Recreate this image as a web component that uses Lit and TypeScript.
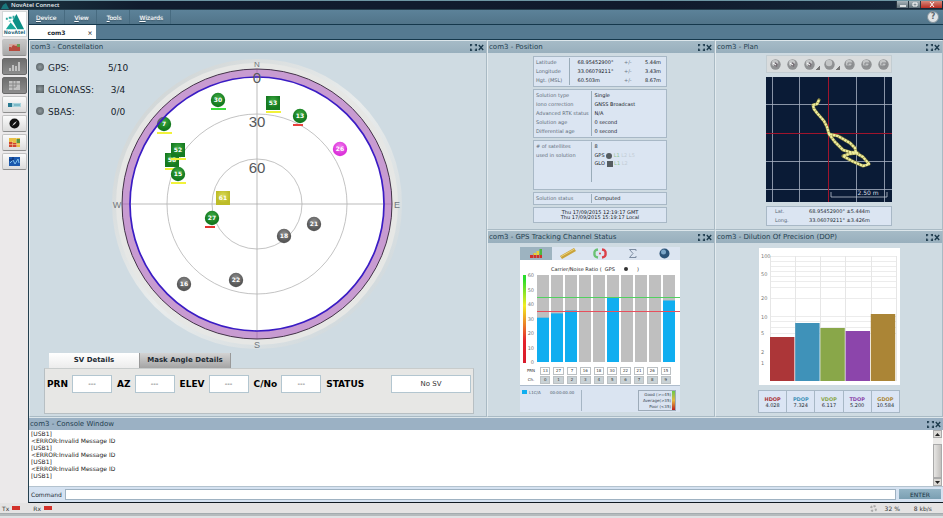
import { LitElement, html, svg, css } from "lit";
import { customElement } from "lit/decorators.js";
import { classMap } from "lit/directives/class-map.js";

type Sat = { id: string; x: number; y: number; sq?: boolean; kind: string; line?: string };

// Coordinates are relative to the centre of the sky plot.
const SATS: Sat[] = [
  { id: "30", x: -39, y: -104, kind: "green", line: "#3ddc3d" },
  { id: "53", x: 16, y: -101, sq: true, kind: "green", line: "#f2f23a" },
  { id: "13", x: 43, y: -88, kind: "green", line: "#e8403c" },
  { id: "26", x: 83, y: -55, kind: "magenta" },
  { id: "7", x: -93, y: -80, kind: "green", line: "#f2f23a" },
  { id: "58", x: -85, y: -44, sq: true, kind: "green", line: "#f2f23a" },
  { id: "52", x: -79, y: -54, sq: true, kind: "green", line: "#f2f23a" },
  { id: "15", x: -79, y: -30, kind: "green", line: "#f2f23a" },
  { id: "61", x: -34, y: -6, sq: true, kind: "yellow" },
  { id: "27", x: -45, y: 14, kind: "green", line: "#e03430" },
  { id: "18", x: 27, y: 32, kind: "gray" },
  { id: "21", x: 57, y: 20, kind: "gray" },
  { id: "22", x: -21, y: 76, kind: "gray" },
  { id: "16", x: -73, y: 80, kind: "gray" },
];

const CHANNELS = [
  { prn: "13", value: 31 }, { prn: "27", value: 34 }, { prn: "7", value: 36 },
  { prn: "16", value: 0 }, { prn: "18", value: 0 }, { prn: "30", value: 45 },
  { prn: "22", value: 0 }, { prn: "21", value: 0 }, { prn: "26", value: 0 },
  { prn: "15", value: 43 },
];

const DOPS = [
  { name: "HDOP", value: "4.028", color: "#ac3638", height: 44 },
  { name: "PDOP", value: "7.324", color: "#3f92b9", height: 58 },
  { name: "VDOP", value: "6.117", color: "#89a749", height: 53 },
  { name: "TDOP", value: "5.200", color: "#8c45ab", height: 50 },
  { name: "GDOP", value: "10.584", color: "#ab8536", height: 67 },
];

const TRACK = "M53 23L51 27L47 28L48 32L51 36L58 44L61 50L63 57L72 59L84 66L89 71L90 76L97 80L103 87L97 89L86 84L77 79L83 77L92 76L84 75L77 73L69 65L63 57";

const windowIcons = html`
  <span class="tools">
    <button class="tool" aria-label="Expand">
      <svg width="7" height="7" viewBox="0 0 7 7"><path d="M0 .9H2.2M4.8 .9H7M0 6.1H2.2M4.8 6.1H7M.8 0V2.2M6.2 0V2.2M.8 4.6V7M6.2 4.6V7" stroke="#1c3a4c" stroke-width="1.3" fill="none"/></svg>
    </button>
    <button class="tool" aria-label="Close">
      <svg width="6" height="7" viewBox="0 0 6 7"><path d="M.8 1L5.2 6M5.2 1L.8 6" stroke="#1c3a4c" stroke-width="1.3"/></svg>
    </button>
  </span>`;

const head = (title: string) => html`<header class="phead"><h2 class="ptitle">com3 - ${title}</h2>${windowIcons}</header>`;

@customElement("sky-plot")
export class SkyPlot extends LitElement {
  static styles = css`
    :host { display: block; }
    svg { display: block; font-family: "DejaVu Sans", sans-serif; }
    .num { font-size: 6px; font-weight: bold; fill: #fff; text-anchor: middle; }
    .deg { font: 15px "Liberation Sans", sans-serif; fill: #55585a; text-anchor: middle; }
    .dir { font: 9px "Liberation Sans", sans-serif; fill: #6f767c; text-anchor: middle; }
    .north { font-size: 8px; }
  `;
  render() {
    return html`<svg width="294" height="294" viewBox="-147 -147 294 294" role="img" aria-label="Satellite constellation">
      <defs>
        <linearGradient id="rim" x1="0" y1="0" x2="1" y2="1"><stop offset="0" stop-color="#c9cfd0"/><stop offset=".5" stop-color="#e9ecec"/><stop offset="1" stop-color="#c9d3d8"/></linearGradient>
        <radialGradient id="green" cy=".35"><stop offset="0" stop-color="#3dab42"/><stop offset="1" stop-color="#157a20"/></radialGradient>
        <radialGradient id="gray" cy=".35"><stop offset="0" stop-color="#909090"/><stop offset="1" stop-color="#585858"/></radialGradient>
        <radialGradient id="magenta" cy=".35"><stop offset="0" stop-color="#f07cee"/><stop offset="1" stop-color="#dc34da"/></radialGradient>
        <radialGradient id="yellow" cy=".35"><stop offset="0" stop-color="#dada58"/><stop offset="1" stop-color="#bdbc28"/></radialGradient>
      </defs>
      <circle r="145" fill="url(#rim)"/>
      <circle r="141" fill="#e6e7e5"/>
      <circle r="127" fill="#fff"/>
      <path d="M-135 0H135M0 -135V135" stroke="#a9a9a9" stroke-width=".8"/>
      <circle r="90" fill="none" stroke="#b4b4b4" stroke-width=".8"/>
      <circle r="45" fill="none" stroke="#b4b4b4" stroke-width=".8"/>
      ${SATS.map((s) => svg`
        ${s.line ? svg`<rect x=${s.x - 7} y=${s.y + 8} width=${s.line.startsWith("#e") ? 10 : 15} height="2" fill=${s.line}/>` : ""}
        ${s.sq
          ? svg`<rect x=${s.x - 7} y=${s.y - 7} width="14" height="14" fill=${`url(#${s.kind})`}/>`
          : svg`<circle cx=${s.x} cy=${s.y} r="7.2" fill=${`url(#${s.kind})`}/>`}
        <text class="num" x=${s.x} y=${s.y + 2}>${s.id}</text>`)}
      <circle r="131" fill="none" stroke="#a33fb8" stroke-opacity=".45" stroke-width="8"/>
      <circle r="135" fill="none" stroke="#433348" stroke-width="1"/>
      <circle r="127" fill="none" stroke="#3a1cc4" stroke-width="1.7"/>
      <text class="deg" x="0" y="-121">0</text>
      <text class="deg" x="0" y="-77">30</text>
      <text class="deg" x="0" y="-31">60</text>
      <text class="dir north" x="0" y="-137">N</text>
      <text class="dir" x="0" y="144">S</text>
      <text class="dir" x="-140" y="4">W</text>
      <text class="dir" x="140" y="4">E</text>
    </svg>`;
  }
}

@customElement("app-root")
export class AppRoot extends LitElement {
  static styles = css`
    :host {
      display: flex; flex-direction: column; min-height: 100vh; overflow: hidden;
      font: 7px/9px "DejaVu Sans", Verdana, sans-serif; color: #1d2a33; background: #e6e5e5;
    }
    * { box-sizing: border-box; }
    button, input { font: inherit; color: inherit; margin: 0; padding: 0; border: 0; background: none; border-radius: 0; min-width: 0; }
    h1, h2, p, dl, dd, dt { margin: 0; font-weight: normal; font-size: inherit; }
    table { border-collapse: collapse; }
    td, th { padding: 0; font-weight: normal; }
    svg { display: block; }

    .titlebar { display: flex; align-items: center; height: 10px; padding-left: 1px; border-top: 1px solid #6d96a3; border-bottom: 1px solid #28414f; background: linear-gradient(90deg, #1b3540, #101c2e 15%, #101a2c 70%, #16293b); color: #e8eef2; font: 6px/8px "Open Sans", sans-serif; }
    .titlebar h1 { flex: 1; padding-left: 2px; font-weight: 600; }
    .win { display: flex; align-self: flex-start; height: 7px; margin-right: 1px; }
    .win button { width: 12px; display: grid; place-items: center; background: linear-gradient(#a8b4ba, #5d6d76); border-left: 1px solid #2b3943; }
    .win .close { width: 22px; background: linear-gradient(#d58a7c, #b92c22); }

    .frame { flex: 1; display: flex; min-height: 0; }
    .side { width: 28px; flex: none; display: flex; flex-direction: column; gap: 2px; align-items: center; padding-top: 1px; background: #ebe9ea; }
    .logo { width: 25px; height: 26px; background: #fff; border: 1px solid #d4d8d8; }
    .side button { width: 25px; height: 17px; display: grid; place-items: center; background: linear-gradient(#fbfbfb, #dcdcdc); border: 1px solid #c2c2c2; border-bottom-color: #8e8e8e; border-radius: 2px; }
    .side .on { background: linear-gradient(#6d6d6d, #8d8d8d); border-color: #6a6a6a; }
    .side .dim { background: linear-gradient(#c7c7c7, #a8a8a8); }

    .work { flex: 1; min-width: 0; display: flex; flex-direction: column; border-left: 1px solid #24404f; border-bottom: 1px solid #101a22; }
    .menu { display: flex; align-items: center; height: 15px; background: linear-gradient(#5c8299, #517489); border-bottom: 1px solid #15384c; padding-right: 4px; }
    .menu button { height: 14px; padding: 0 7px; margin-right: 3px; color: #fff; font-size: 6px; border-right: 1px solid #476b80; text-shadow: 0 1px 1px #2f4b5c, 0 0 1px #fff; }
    .menu u { text-decoration-thickness: 1px; }
    .menu .help { margin: 0 0 0 auto; width: 12px; height: 12px; padding: 0; border: 1px solid #83939c; border-radius: 50%; background: #dfe3e5; color: #5d6a72; font-size: 8px; font-weight: bold; line-height: 10px; text-shadow: none; }
    .tabs { display: flex; height: 15px; background: #557a91; border-bottom: 1px solid #15384c; }
    .tab { display: flex; align-items: center; width: 67px; background: #fff; font-size: 6px; font-weight: bold; }
    .tab span { flex: 1; text-align: center; }
    .tab button { width: 12px; color: #444; }

    .grid { flex: 190 1 0; display: grid; grid-template-columns: 458fr 228fr 228fr; grid-template-rows: 190fr 187fr; }
    .panel { display: flex; flex-direction: column; min-width: 0; background: #cfdbe2; border: 1px solid #a9bac4; border-left-color: #e3ebef; border-top-color: #dce6eb; }
    .tall { grid-row: span 2; }
    .phead { flex: none; display: flex; align-items: center; height: 12px; padding: 0 2px 0 1px; background: linear-gradient(#a6bbc7, #98afbd); }
    .ptitle { flex: 1; font-size: 7px; color: #23404f; }
    .tools { display: flex; gap: 1px; }
    .body { flex: 1; display: flex; flex-direction: column; align-items: center; min-height: 0; padding-top: 2px; }

    .sky { flex: 1; align-self: stretch; display: grid; justify-items: center; align-items: start; margin: 2px 3px 0 0; }
    .sky > * { grid-area: 1 / 1; }
    .legend { justify-self: start; z-index: 1; margin: 6px 0 0 6px; font-size: 9px; line-height: 11px; color: #16222a; }
    .legend td { padding-bottom: 11px; width: 44px; text-align: center; }
    .legend th { padding-bottom: 11px; text-align: left; width: 60px; }
    .mark { display: inline-block; width: 8px; height: 8px; margin-right: 4px; border-radius: 50%; background: radial-gradient(#909a9e, #4f585c); }
    .mark.sq { border-radius: 0; }

    .details { align-self: stretch; margin: 0 12px 2px 14px; }
    .dtabs { display: flex; padding-left: 5px; }
    .dtabs button { width: 91px; height: 15px; font-size: 7px; font-weight: bold; background: linear-gradient(#d3d3d3, #a4a4a4); border-right: 1px solid #999; }
    .dtabs .sel { background: linear-gradient(#fff, #ececec); }
    .drow { display: flex; align-items: flex-start; gap: 5px; height: 46px; padding: 6px 2px 0 2px; background: #e7e7e5; border: 1px solid #b7bfc3; border-top-color: #c8cccc; font-size: 9px; font-weight: bold; }
    .drow label { display: flex; align-items: center; gap: 4px; line-height: 17px; white-space: nowrap; color: #000; }
    .drow .status { flex: 1; justify-content: space-between; }
    .drow input { width: 40px; height: 18px; flex: none; background: #fff; border: 1px solid #b3c6d0; text-align: center; font-size: 7px; font-weight: normal; color: #333; }
    .drow .status input { width: 80px; }

    .pos { width: 134px; display: flex; flex-direction: column; gap: 2px; padding-top: 1px; margin-right: 2px; font-size: 5px; line-height: 9px; color: #162028; }
    .card { background: #dbe5f2; border: 1px solid #a8b8c6; }
    .pos .card { padding: 1px 2px; }
    .pos table { width: 100%; table-layout: fixed; }
    .pos th { text-align: left; color: #5c6b78; width: 55px; border-right: 1px solid #9aacb9; white-space: nowrap; }
    .pos td { padding-left: 3px; white-space: nowrap; }
    .pos .c1 th { width: 33px; }
    .pos .c1 td { padding-left: 8px; }
    .pos .c1 .pm { width: 18px; color: #697886; padding-left: 0; }
    .pos .c1 .acc { width: 22px; padding: 0; text-align: center; }
    .pos .used { height: 50px; }
    .used td, .used th { vertical-align: top; }
    .used .fill { height: 31px; line-height: 8px; }
    .when { text-align: center; line-height: 5px; }
    .pos .when { padding: 2px; }
    .mini { display: inline-block; width: 6px; height: 6px; background: #555c60; vertical-align: middle; }
    .mini.rd { border-radius: 50%; }
    .l1 { color: #8fc493; } .l2 { color: #c3cdd6; }

    .ptools { display: flex; align-items: center; gap: 7px; width: 126px; height: 18px; padding: 0 3px; background: #d9dcdd; border: 1px solid #c3cdd2; }
    .ptools button { width: 11px; height: 11px; }
    .ptools .drop { width: 4px; height: 4px; margin: 7px -3px 0 -5px; background: linear-gradient(135deg, transparent 40%, #777 40%); }
    .map { margin: 4px 0; }
    .map text { font-size: 6px; fill: #d7dde5; text-anchor: middle; }
    .ll { width: 126px; height: 20px; font-size: 5px; line-height: 9px; }
    .ll table { width: 100%; }
    .ll th { width: 42px; text-align: left; padding-left: 8px; color: #5c6b78; }

    .track { width: 160px; background: #fff; margin: 2px 2px 0 0; font-size: 5px; }
    .ttabs { display: flex; background: #dce5f1; }
    .ttabs button { flex: 1; height: 13px; display: grid; place-items: center; }
    .ttabs .sel { background: #9db3c0; }
    .track text { font-size: 5px; fill: #777; }
    .track .cap { fill: #222; font-size: 5px; text-anchor: middle; }
    .chan { width: 152px; margin-left: 2px; table-layout: fixed; border-collapse: separate; border-spacing: 3px 1px; margin-right: 3px; font-size: 4px; line-height: 6px; text-align: center; color: #333; }
    .chan th { width: 12px; }
    .chan td { border: 1px solid #bcc1c4; height: 7px; }
    .chan .num td { background: #c9d2d6; }
    .tfoot { display: flex; justify-content: space-between; height: 27px; padding: 4px 4px 1px 2px; border-top: 1px solid #aebccc; background: #dae4f1; color: #4e5d6b; font-size: 4px; line-height: 6px; }
    .tfoot .sig { width: 60px; border-right: 1px solid #a5b5c4; }
    .sw { display: inline-block; width: 5px; height: 4px; background: #10aef0; margin-right: 2px; }
    .sig .gap { margin-left: 8px; }
    .scale { width: 38px; border: 1px solid #9dabb9; text-align: right; white-space: nowrap; color: #34424e; padding: 1px 4px 0 0; background: linear-gradient(#67c94c, #e5b640 50%, #b81f20) right / 3px 100% no-repeat; }

    .dop { background: #fff; width: 141px; margin: 3px 0 5px; }
    .dop text { font-size: 5px; fill: #777; }
    .dops { width: 142px; table-layout: fixed; background: #dbe5f4; border: 1px solid #a8b8c6; font-size: 5px; line-height: 6px; text-align: center; height: 23px; }
    .dops th, .dops td { border-left: 1px solid #a8b8c6; }
    .dops th { font-weight: bold; vertical-align: bottom; }
    .dops td { vertical-align: top; }

    .console { border-top: 1px solid #dce6eb; font-size: 6px; line-height: 7px; }
    .console .phead { background: #9bb1c4; }
    .log { display: flex; height: 56px; background: #fff; }
    .log p { flex: 1; white-space: pre-line; padding: 0 2px; color: #222; }
    .scroll { width: 9px; display: flex; flex-direction: column; background: #ecebe9; margin-right: 1px; }
    .scroll button { height: 8px; display: grid; place-items: center; background: #dcdad6; border: 1px solid #aaa; }
    .scroll .thumb { flex: 1; margin-top: 6px; background: linear-gradient(90deg, #e6e5e3, #c2c0bd); border: 1px solid #aaa; }
    .cmd { display: flex; align-items: center; gap: 3px; height: 16px; padding: 2px 2px 3px; background: #d5e2f1; border-top: 1px solid #b4c3cf; }
    .cmd input { flex: 1; height: 11px; background: #fff; border: 1px solid #9fb2c2; font-size: 6px; }
    .cmd button { width: 42px; height: 10px; background: linear-gradient(#93b4c5, #7b9fb2); font-size: 6px; line-height: 9px; color: #16303e; }
    .statusbar { display: flex; align-items: center; height: 11px; padding: 0 11px 0 2px; border-bottom: 1px solid #a4acaf; background: #e4e3e3; font-size: 6px; color: #333; }
    .led { width: 8px; height: 4px; margin: 0 13px 0 3px; background: #d2322b; }
    .statusbar .busy { margin-left: auto; width: 7px; height: 7px; border-radius: 50%; border: 2px dotted #aaa; }
    .statusbar .pct { margin: 0 14px 0 8px; }
    .under { height: 4px; background: linear-gradient(#b5bbbd 60%, #dfe2e4 60%); }
  `;

  private sideIcon(n: number) {
    const shapes = [
      svg`<path d="M1 3H12V10H1Z" fill="#d4a59c"/><path d="M1 10V6H3V7L5 4L8 5L12 3V10Z" fill="#b64b3e"/><path d="M9 3H12V6H9Z" fill="#6b9b54"/>`,
      svg`<path d="M1 11V8H3V11ZM4 11V5H6V11ZM7 11V6H9V11ZM10 11V2H12V11Z" fill="#c0c0c0"/>`,
      svg`<path d="M1 2H12V11H1Z" fill="#c2c2c2"/><path d="M5 2V11M8 2V8M1 5H12M1 8H8" stroke="#888"/>`,
      svg`<rect y="5" width="13" height="4" fill="#a9d4dd"/><rect y="5" width="4" height="4" fill="#287890"/><path d="M6 7H12" stroke="#4f9fb3"/>`,
      svg`<circle cx="6.5" cy="6.5" r="5" fill="#111"/><path d="M4 9L6 6L9 4L7 7Z" fill="#ddd"/>`,
      svg`<path d="M1 2H12V11H1Z" fill="#e8bf45"/><path d="M1 6H5V11H1ZM5 7H9V11H5Z" fill="#cf4430"/><path d="M8 3H12V7H8Z" fill="#5b9442"/><path d="M1 8.500H12M4.500 5V11M8.500 2V11" stroke="#f4e3a8" stroke-width=".5"/>`,
      svg`<path d="M1 2H12V11H1Z" fill="#1b58ad"/><path d="M2 8L5 5L7 9L10 4L11 8" stroke="#7fc1ed" fill="none"/><path d="M5 2V5H1" stroke="#0d2d6b" fill="none"/>`,
    ];
    return html`<svg width="13" height="13" viewBox="0 0 13 13">${shapes[n]}</svg>`;
  }

  private skyPanel() {
    const field = (name: string) => html`<label>${name}<input readonly value="---" /></label>`;
    return html`<section class="panel tall">${head("Constellation")}
      <div class="body">
        <div class="sky">
          <table class="legend">
            <tr><th scope="row"><i class="mark"></i>GPS:</th><td>5/10</td></tr>
            <tr><th scope="row"><i class="mark sq"></i>GLONASS:</th><td>3/4</td></tr>
            <tr><th scope="row"><i class="mark"></i>SBAS:</th><td>0/0</td></tr>
          </table>
          <sky-plot></sky-plot>
        </div>
        <div class="details">
          <div class="dtabs"><button class="sel">SV Details</button><button>Mask Angle Details</button></div>
          <div class="drow">
            ${["PRN", "AZ", "ELEV", "C/No"].map(field)}
            <label class="status">STATUS<input readonly value="No SV" /></label>
          </div>
        </div>
      </div></section>`;
  }

  private positionPanel() {
    const rows = (list: string[][]) => list.map(([k, v]) => html`<tr><th scope="row">${k}</th><td>${v}</td></tr>`);
    return html`<section class="panel">${head("Position")}
      <div class="body"><div class="pos">
        <div class="card"><table class="c1">
          ${[["Latitude", "68.95452900°", "5.44m"], ["Longitude", "33.06079211°", "3.43m"], ["Hgt. (MSL)", "60.503m", "8.67m"]].map(
            (r) => html`<tr><th scope="row">${r[0]}</th><td>${r[1]}</td><td class="pm">+/-</td><td class="acc">${r[2]}</td></tr>`)}
        </table></div>
        <div class="card"><table>${rows([["Solution type", "Single"], ["Iono correction", "GNSS Broadcast"], ["Advanced RTK status", "N/A"], ["Solution age", "0 second"], ["Differential age", "0 second"]])}</table></div>
        <div class="card used"><table>
          <tr><th scope="row"># of satellites</th><td>8</td></tr>
          <tr class="fill"><th scope="row">used in solution</th><td class="fill">GPS <i class="mini rd"></i> <span class="l1">L1</span> <span class="l2">L2 L5</span><br />GLO <i class="mini"></i> <span class="l1">L1</span> <span class="l2">L2</span></td></tr>
        </table></div>
        <div class="card"><table>${rows([["Solution status", "Computed"]])}</table></div>
        <div class="card when">Thu 17/09/2015 12:19:17 GMT<br />Thu 17/09/2015 15:19:17 Local</div>
      </div></div></section>`;
  }

  private planPanel() {
    const names = ["Zoom in", "Zoom out", "Measure", "Layers", "Clear", "Centre", "Options"];
    return html`<section class="panel">${head("Plan")}
      <div class="body">
        <div class="ptools">${names.map((n, i) => html`<button aria-label=${n}>
            <svg width="11" height="11" viewBox="0 0 11 11"><circle cx="5.5" cy="5.5" r="5.2" fill="#8f9193"/><circle cx="5" cy="4" r="3.2" fill="#c3c5c6"/>
            ${i === 3 ? "" : i < 3 ? svg`<path d="M5 3L8 5L7 8L4 7" fill="#777177"/><path d="M3 4L6 6" stroke="#fff"/>` : svg`<path d="M4 8V4H8V7H5" fill="none" stroke="#85878a"/>`}</svg>
          </button>${i === 2 || i === 3 ? html`<i class="drop"></i>` : ""}`)}</div>
        <svg class="map" width="126" height="125" viewBox="0 0 126 125" role="img" aria-label="Plan track">
          <rect width="126" height="125" fill="#0a1b36"/>
          <path d="M6.5 0V125M33.5 0V125M90.5 0V125M118.5 0V125M0 27.5H126M0 84.5H126M0 112.5H126" stroke="#a9b4c4" stroke-width=".8"/>
          <rect x="62" y="0" width="1" height="125" fill="#a0142c"/>
          <rect x="0" y="56" width="126" height="1" fill="#a0142c"/>
          <path d=${TRACK} fill="none" stroke="#8f8a42" stroke-width="3.2" stroke-linejoin="round" stroke-linecap="round"/>
          <path d=${TRACK} fill="none" stroke="#f0efa0" stroke-width="2.2" stroke-dasharray="2.5 .6" stroke-linejoin="round"/>
          <path d="M65 115V120H121V115" fill="none" stroke="#b9c2cf" stroke-width=".8"/>
          <text x="102" y="118">2.50 m</text>
        </svg>
        <div class="card ll"><table>
          <tr><th scope="row">Lat.</th><td>68.95452900° ±5.444m</td></tr>
          <tr><th scope="row">Long.</th><td>33.06079211° ±3.426m</td></tr>
        </table></div>
      </div></section>`;
  }

  private trackingPanel() {
    return html`<section class="panel">${head("GPS Tracking Channel Status")}
      <div class="body"><div class="track">
        <div class="ttabs">
          <button class="sel" aria-label="Signal"><svg width="14" height="11" viewBox="0 0 14 11"><path d="M1 10V7H4V10ZM4.5 10V5.5H7V10ZM7.5 10V7H10V10ZM10.5 10V6H13V10Z" fill="#d0322b"/><path d="M4.5 7H7V5H4.5ZM7.5 7H10V3H7.5Z" fill="#e6d33a"/><path d="M10.5 7H13V1H10.5Z" fill="#4cb53f"/></svg></button>
          <button aria-label="Range"><svg width="16" height="11" viewBox="0 0 16 11"><path d="M0 8L14 0L16 3L2 11Z" fill="#c9a33b"/><path d="M1 8.5L14.5 1" stroke="#ecd27c"/></svg></button>
          <button aria-label="Doppler"><svg width="14" height="11" viewBox="0 0 14 11"><path d="M5 1.5Q1 2 1.5 5.5Q1 9 5 9.5" fill="none" stroke="#6cc274" stroke-width="2.4"/><path d="M9 1.5Q13 2 12.5 5.5Q13 9 9 9.5" fill="none" stroke="#dc4048" stroke-width="2.4"/><circle cx="7" cy="5.5" r="1" fill="#dc4048"/></svg></button>
          <button aria-label="Sum"><svg width="9" height="11" viewBox="0 0 9 11"><path d="M8 3V1.5H1.5L5 5.5L1.5 9.5H8V8" fill="none" stroke="#7d8da2"/></svg></button>
          <button aria-label="World"><svg width="11" height="11" viewBox="0 0 11 11"><circle cx="5.5" cy="5.5" r="5" fill="#2b5378"/><circle cx="4.5" cy="4" r="2.5" fill="#7ba6c8"/></svg></button>
        </div>
        <svg width="160" height="106" viewBox="0 0 160 106" role="img" aria-label="Carrier to noise ratio chart">
          <defs><linearGradient id="cn" x1="0" y1="0" x2="0" y2="1"><stop offset=".05" stop-color="#2bdc2b"/><stop offset=".35" stop-color="#f2ec22"/><stop offset=".75" stop-color="#e5222c"/><stop offset="1" stop-color="#d81c2c"/></linearGradient></defs>
          <text class="cap" x="63" y="11">Carrier/Noise Ratio (&nbsp; GPS</text>
          <circle cx="106" cy="9" r="2" fill="#333"/><text class="cap" x="118" y="11">)</text>
          <rect x="3" y="15" width="3" height="88" fill="url(#cn)"/>
          ${[60, 50, 40, 30, 20, 10, 0].map((v) => svg`<text x="14" y=${104 - v * 1.45} text-anchor="end">${v}</text>`)}
          ${CHANNELS.map((c, i) => svg`<rect x=${17 + i * 14} y="15" width="12" height="87" fill="#bfbfbf"/>
            <rect x=${17 + i * 14} y=${102 - c.value * 1.43} width="12" height=${c.value * 1.43} fill="#10aef0"/>`)}
          <rect x="17" y="37" width="143" height="1" fill="#52d060"/>
          <rect x="17" y="51" width="143" height="1" fill="#e6505c"/>
        </svg>
        <table class="chan">
          <tr><th scope="row">PRN</th>${CHANNELS.map((c) => html`<td>${c.prn}</td>`)}</tr>
          <tr class="num"><th scope="row">Ch.</th>${CHANNELS.map((_, i) => html`<td>${i}</td>`)}</tr>
        </table>
        <div class="tfoot">
          <div class="sig"><i class="sw"></i>L1C/A <span class="gap">00:00:00.00</span></div>
          <div class="scale">Good (&gt;=45)<br />Average(&gt;35)<br />Poor (&lt;35)</div>
        </div>
      </div></div></section>`;
  }

  private dopPanel() {
    const labels: [string, number][] = [["100", 10], ["50", 28], ["20", 52], ["10", 71], ["5", 87], ["2", 106], ["1", 117]];
    const lines = [8, 13, 18, 23, 28, 33, 39, 50, 68, 73, 79, 85];
    return html`<section class="panel">${head("Dilution Of Precision (DOP)")}
      <div class="body">
        <svg class="dop" width="141" height="137" viewBox="0 0 141 137" role="img" aria-label="Dilution of precision chart">
          ${lines.map((y) => svg`<path d=${`M11 ${y}.5H137`} stroke="#ececec"/>`)}
          ${[11, 36, 61, 86, 112, 137].map((x) => svg`<path d=${`M${x}.5 8V133`} stroke="#e6e6e6"/>`)}
          ${labels.map(([t, y]) => svg`<text x="2" y=${y}>${t}</text>`)}
          ${DOPS.map((d, i) => svg`<rect x=${11 + i * 25.2} y=${133 - d.height} width="24.4" height=${d.height} fill=${d.color}/>`)}
        </svg>
        <table class="dops">
          <tr>${DOPS.map((d) => html`<th scope="col" style=${`color:${d.color}`}>${d.name}</th>`)}</tr>
          <tr>${DOPS.map((d) => html`<td>${d.value}</td>`)}</tr>
        </table>
      </div></section>`;
  }

  render() {
    const log = "[USB1]\n<ERROR:Invalid Message ID\n[USB1]\n<ERROR:Invalid Message ID\n[USB1]\n<ERROR:Invalid Message ID\n[USB1]";
    return html`
      <header class="titlebar">
        <svg width="8" height="7" viewBox="0 0 8 7"><path d="M0 7L2 3L5 1L8 7Z" fill="#19777c"/></svg>
        <h1>NovAtel Connect</h1>
        <div class="win">
          <button aria-label="Minimize"><svg width="6" height="5"><path d="M0 4H6" stroke="#fff" stroke-width="1.5"/></svg></button>
          <button aria-label="Maximize"><svg width="6" height="5"><path d="M1 1H5V4H1Z" fill="none" stroke="#fff"/></svg></button>
          <button class="close" aria-label="Close"><svg width="6" height="5"><path d="M1 0L5 5M5 0L1 5" stroke="#fff"/></svg></button>
        </div>
      </header>
      <div class="frame">
        <nav class="side">
          <svg class="logo" viewBox="0 0 24 25">
            <path d="M14 2L22 18H15L10 9Z" fill="#0d8f86"/><path d="M8 11L14 18H3Z" fill="#18a79a"/><path d="M3 6H5V8H3ZM6 5H9V7H6ZM6 9H8V10H6ZM10 4H12V7H10Z" fill="#2fa9a0"/>
            <text x="12" y="23" text-anchor="middle" font-size="5" font-weight="bold" fill="#1c6476">NovAtel</text>
          </svg>
          ${["Signals", "Tracking", "Layout", "Logging", "Compass", "Charts", "Map"].map((n, i) => html`
            <button class=${classMap({ on: i === 1 || i === 2, dim: i === 0 })} aria-label=${n}>${this.sideIcon(i)}</button>`)}
        </nav>
        <main class="work">
          <nav class="menu">
            ${["Device", "View", "Tools", "Wizards"].map((m) => html`<button><u>${m[0]}</u>${m.slice(1)}</button>`)}
            <button class="help" aria-label="Help">?</button>
          </nav>
          <div class="tabs"><div class="tab"><span>com3</span><button aria-label="Close tab">×</button></div></div>
          <div class="grid">
            ${this.skyPanel()} ${this.positionPanel()} ${this.planPanel()} ${this.trackingPanel()} ${this.dopPanel()}
          </div>
          <section class="console">${head("Console Window")}
            <div class="log"><p>${log}</p>
              <div class="scroll">
                <button aria-label="Scroll up"><svg width="5" height="3"><path d="M0 3L2.5 0L5 3Z" fill="#222"/></svg></button>
                <div class="thumb"></div>
                <button aria-label="Scroll down"><svg width="5" height="3"><path d="M0 0L2.5 3L5 0Z" fill="#222"/></svg></button>
              </div>
            </div>
            <div class="cmd"><label for="cmd">Command</label><input id="cmd" /><button>ENTER</button></div>
          </section>
        </main>
      </div>
      <footer class="statusbar">
        Tx<i class="led"></i> Rx<i class="led"></i>
        <i class="busy"></i><span class="pct">32 %</span><span>8 kb/s</span>
      </footer>
      <div class="under"></div>`;
  }
}
